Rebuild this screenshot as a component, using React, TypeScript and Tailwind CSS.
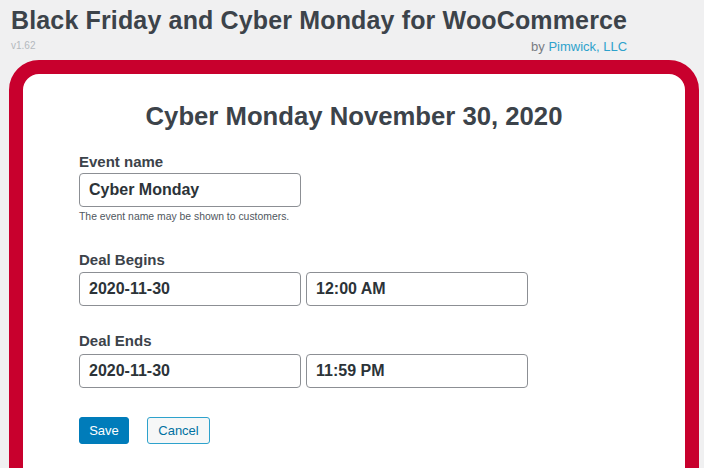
import React from "react";

const font = { fontFamily: '"Liberation Sans", Arial, sans-serif' };

function Field({ value }: { value: string }) {
  return (
    <input
      readOnly
      value={value}
      className="h-[34px] w-[222px] rounded-[4px] border border-[#8c8f94] bg-white px-[9px] text-[16px] font-bold text-[#2c3338] outline-none"
    />
  );
}

export default function App() {
  return (
    <div
      className="min-h-screen overflow-hidden bg-[#f0f0f1] pb-4"
      style={font}
    >
      {/* plugin header */}
      <div className="inline-block pl-[11px] pt-[5px]">
        <h1 className="text-[25px] font-bold leading-[30px] tracking-[0.15px] text-[#3c434a]">
          Black Friday and Cyber Monday for WooCommerce
        </h1>
        <div className="flex items-start justify-between">
          <span className="pt-[5px] text-[10px] leading-[12px] text-[#b4b9be]">
            v1.62
          </span>
          <span className="pt-[4px] text-[13px] leading-[15px] text-[#787c82]">
            by <span className="text-[#2ea2cc]">Pimwick, LLC</span>
          </span>
        </div>
      </div>

      {/* event card */}
      <div className="ml-[9px] mr-[5px] mt-[4px] rounded-[30px] border-[14px] border-[#c8002d] bg-white px-[56px] pb-[40px] pt-[26px]">
        <h2 className="text-center text-[25.7px] font-semibold leading-[32px] text-[#3c434a]">
          Cyber Monday November 30, 2020
        </h2>

        <div className="mt-[20px]">
          <label className="block text-[15px] font-bold leading-[20px] text-[#3c434a]">
            Event name
          </label>
          <div className="mt-[1px]">
            <Field value="Cyber Monday" />
          </div>
          <p className="mt-[3px] text-[10.4px] leading-[14px] text-[#50575e]">
            The event name may be shown to customers.
          </p>
        </div>

        <div className="mt-[26px]">
          <label className="block text-[15px] font-bold leading-[20px] text-[#3c434a]">
            Deal Begins
          </label>
          <div className="mt-[2px] flex gap-[5px]">
            <Field value="2020-11-30" />
            <Field value="12:00 AM" />
          </div>
        </div>

        <div className="mt-[25px]">
          <label className="block text-[15px] font-bold leading-[20px] text-[#3c434a]">
            Deal Ends
          </label>
          <div className="mt-[3px] flex gap-[5px]">
            <Field value="2020-11-30" />
            <Field value="11:59 PM" />
          </div>
        </div>

        <div className="mt-[29px] flex gap-[18px]">
          <button className="h-[27px] w-[50px] rounded-[3px] border border-[#007cba] bg-[#007cba] text-[13px] text-white">
            Save
          </button>
          <button className="h-[27px] w-[63px] rounded-[3px] border border-[#2ea2cc] bg-[#f6f7f7] text-[13px] text-[#0071a1]">
            Cancel
          </button>
        </div>
      </div>
    </div>
  );
}
